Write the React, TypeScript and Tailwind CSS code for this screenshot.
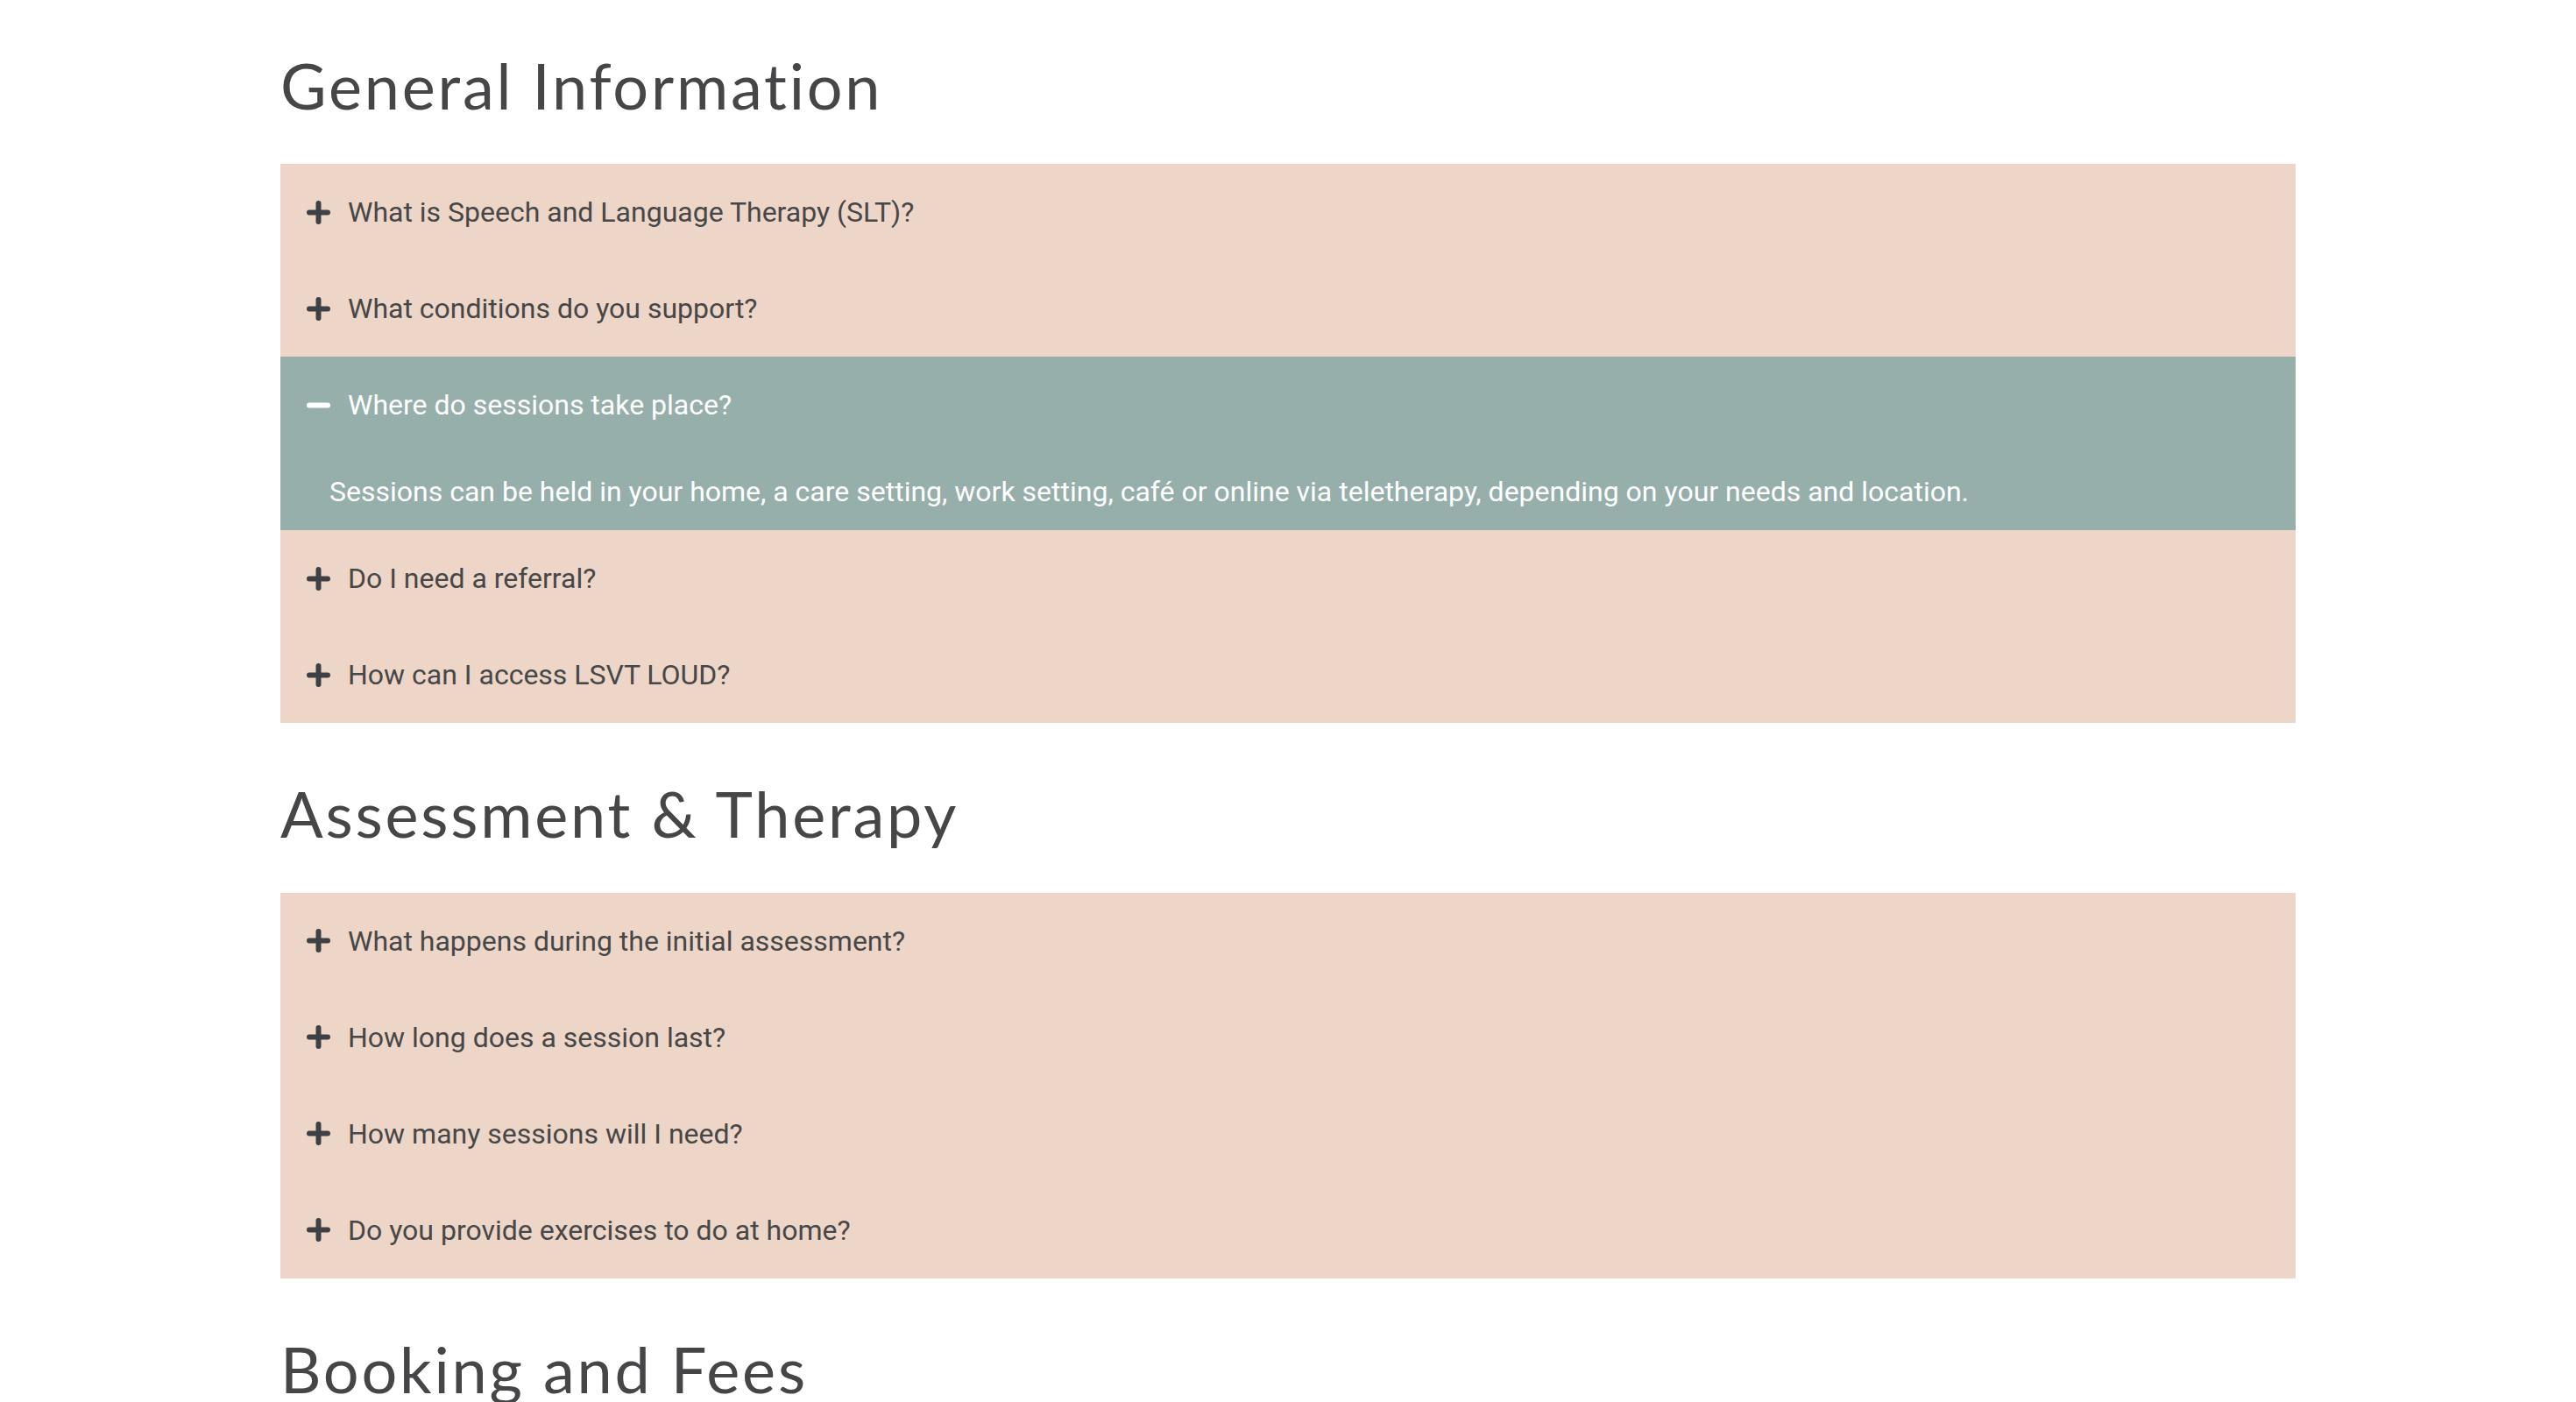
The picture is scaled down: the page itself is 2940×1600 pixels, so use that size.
import React, { useState } from 'react';

interface FaqItem {
  id: string;
  question: string;
  answer: string;
}

interface FaqGroup {
  title: string;
  items: FaqItem[];
}

const groups: FaqGroup[] = [
  {
    title: 'General Information',
    items: [
      {
        id: 'slt',
        question: 'What is Speech and Language Therapy (SLT)?',
        answer:
          'Speech and Language Therapy supports people with communication, voice and swallowing difficulties.',
      },
      {
        id: 'conditions',
        question: 'What conditions do you support?',
        answer: 'We support a wide range of adult communication and swallowing conditions.',
      },
      {
        id: 'where',
        question: 'Where do sessions take place?',
        answer:
          'Sessions can be held in your home, a care setting, work setting, café or online via teletherapy, depending on your needs and location.',
      },
      {
        id: 'referral',
        question: 'Do I need a referral?',
        answer: 'No referral is needed, you can contact us directly.',
      },
      {
        id: 'lsvt',
        question: 'How can I access LSVT LOUD?',
        answer: 'Get in touch and we will talk you through the LSVT LOUD programme.',
      },
    ],
  },
  {
    title: 'Assessment & Therapy',
    items: [
      {
        id: 'initial',
        question: 'What happens during the initial assessment?',
        answer: 'We discuss your history and goals and carry out an informal assessment.',
      },
      {
        id: 'length',
        question: 'How long does a session last?',
        answer: 'Most sessions last between 45 and 60 minutes.',
      },
      {
        id: 'count',
        question: 'How many sessions will I need?',
        answer: 'This depends on your needs and goals, and is agreed together.',
      },
      {
        id: 'home',
        question: 'Do you provide exercises to do at home?',
        answer: 'Yes, home practice is a key part of therapy.',
      },
    ],
  },
  {
    title: 'Booking and Fees',
    items: [],
  },
];

function PlusMinus({ open }: { open: boolean }) {
  return (
    <svg width="27" height="27" viewBox="0 0 27 27" className="shrink-0" aria-hidden="true">
      <line x1="3" y1="13.5" x2="24" y2="13.5" stroke="currentColor" strokeWidth="6" strokeLinecap="round" />
      {!open && (
        <line x1="13.5" y1="3" x2="13.5" y2="24" stroke="currentColor" strokeWidth="6" strokeLinecap="round" />
      )}
    </svg>
  );
}

export default function App() {
  const [openId, setOpenId] = useState<string | null>('where');

  return (
    <div className="min-h-screen bg-white pt-[54px] font-['Roboto',sans-serif]">
      <div className="mx-auto w-[2300px]">
        {groups.map((group, gi) => (
          <section key={group.title} className={gi > 0 ? 'mt-[60px]' : ''}>
            <h2 className="mb-[47px] font-['Lato',sans-serif] text-[72px] leading-[1.2] font-normal tracking-[2.8px] text-[#464649]">
              {group.title}
            </h2>

            {group.items.length > 0 && (
              <div className="bg-[#edd5c7]">
                {group.items.map((item) => {
                  const open = openId === item.id;
                  return (
                    <div key={item.id} className={open ? 'bg-[#96afab]' : ''}>
                      <button
                        onClick={() => setOpenId(open ? null : item.id)}
                        className={`flex w-full items-center gap-[20px] py-[31px] pl-[30px] text-left text-[32px] leading-[48px] ${
                          open ? 'text-white' : 'text-[#474747]'
                        }`}
                      >
                        <span className={open ? 'text-white' : 'text-[#3e4043]'}>
                          <PlusMinus open={open} />
                        </span>
                        <span>{item.question}</span>
                      </button>
                      {open && (
                        <p className="pt-[20px] pb-[20px] pl-[56px] pr-[30px] text-[32px] leading-[48px] text-white">
                          {item.answer}
                        </p>
                      )}
                    </div>
                  );
                })}
              </div>
            )}
          </section>
        ))}
      </div>
    </div>
  );
}
